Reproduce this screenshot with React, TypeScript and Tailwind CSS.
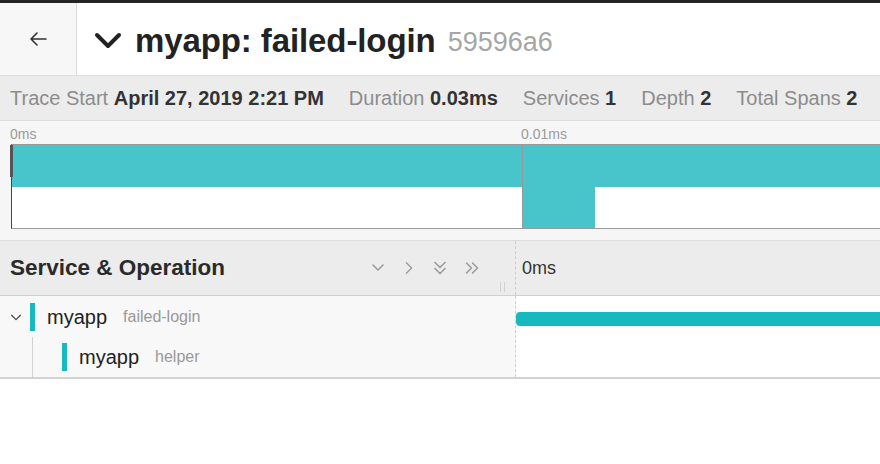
import React from "react";

const Chev = ({ d, w = 14, h = 14, sw = 1.5, color = "#999" }: { d: string; w?: number; h?: number; sw?: number; color?: string }) => (
  <svg width={w} height={h} viewBox="0 0 16 16" fill="none" stroke={color} strokeWidth={sw} strokeLinecap="round" strokeLinejoin="round">
    <path d={d} />
  </svg>
);

export default function App() {
  return (
    <div className="w-[880px] h-[464px] bg-white overflow-hidden font-['Liberation_Sans',Arial,sans-serif] text-[#222]">
      <div className="h-[3px] bg-[#242424]" />
      {/* header */}
      <header className="flex h-[73px] border-b border-[#dedede]">
        <div className="w-[77px] shrink-0 bg-[#f7f7f7] border-r border-[#dadada] flex items-center justify-center">
          <svg width="24" height="24" viewBox="0 0 24 24" fill="none" stroke="#333" strokeWidth="1.6" strokeLinecap="round" strokeLinejoin="round">
            <path d="M20 12H5M11 6l-6 6 6 6" />
          </svg>
        </div>
        <div className="flex items-center pl-[17px] pt-[3px]">
          <svg width="28" height="18" viewBox="0 0 28 18" fill="none" stroke="#222" strokeWidth="4" strokeLinecap="round" strokeLinejoin="round">
            <path d="M3 3l11 11L25 3" />
          </svg>
          <span className="ml-[13px] text-[33px] font-bold tracking-[-0.1px] leading-none">myapp: failed-login</span>
          <span className="ml-[12px] text-[27px] text-[#a6a6a6] leading-none mt-[3px]">59596a6</span>
        </div>
      </header>
      {/* stats */}
      <div className="h-[44px] bg-[#ececec] flex items-center pl-[10px] text-[20px] text-[#8c8c8c] gap-[25px]">
        <span>Trace Start <b className="text-[#333]">April 27, 2019 2:21 PM</b></span>
        <span>Duration <b className="text-[#333]">0.03ms</b></span>
        <span>Services <b className="text-[#333]">1</b></span>
        <span>Depth <b className="text-[#333]">2</b></span>
        <span>Total Spans <b className="text-[#333]">2</b></span>
      </div>
      {/* minimap */}
      <div className="h-[121px] bg-[#f6f6f6] border-t border-[#dcdcdc] border-b border-[#d8d8d8] pl-[11px] pt-[4px]">
        <div className="flex text-[14px] text-[#9a9a9a] h-[19px] items-center -ml-[1px]">
          <span className="w-[511px]">0ms</span>
          <span>0.01ms</span>
        </div>
        <div className="relative h-[85px] border-y border-[#9a9a9a] border-l border-l-[#444] bg-white flex flex-col">
          <div className="h-[42px] bg-[#48c5ca]" />
          <div className="flex-1 flex">
            <div className="w-[510px]" />
            <div className="w-[73px] bg-[#48c5ca]" />
          </div>
          <div className="absolute left-[510px] top-0 bottom-0 w-px bg-[#999]" />
          <div className="absolute -left-[2px] top-0 h-[32px] w-[3px] bg-[#555]" />
        </div>
      </div>
      {/* table header */}
      <div className="flex h-[55px] bg-[#ebeceb] border-b border-[#d0d0d0]">
        <div className="w-[516px] shrink-0 relative flex items-center pl-[10px] border-r border-dashed border-[#cfcfcf]">
          <span className="text-[22.5px] font-bold text-[#2a2a2a]">Service &amp; Operation</span>
          <div className="absolute left-[370px] top-[19px] flex items-center gap-[16px]">
            <Chev d="M3 5l5 5 5-5" w={16} h={16} />
            <Chev d="M5 2l6 6-6 6" w={14} h={16} />
            <Chev d="M3 2.5l5 5 5-5M3 8.5l5 5 5-5" w={16} h={16} />
            <Chev d="M2.5 3l5 5-5 5M8.5 3l5 5-5 5" w={16} h={16} />
          </div>
          <div className="absolute left-[500px] top-[41px] h-[10px] w-[5px] border-x border-[#d2d2d2]" />
        </div>
        <div className="flex items-center pl-[6px] text-[18px] text-[#333]">0ms</div>
      </div>
      {/* rows */}
      <div className="flex border-b-2 border-[#d3d3d3]">
        <div className="w-[516px] shrink-0 bg-[#f8f8f8] border-r border-dashed border-[#d0d0d0]">
          <div className="h-[41px] flex items-center relative">
            <div className="w-[30px] flex justify-center pl-[1px]">
              <Chev d="M3 6l5 5 5-5" w={14} h={14} sw={1.4} color="#444" />
            </div>
            <div className="w-[5px] h-[28px] bg-[#17b8be]" />
            <span className="ml-[12px] text-[20px] text-[#222]">myapp</span>
            <span className="ml-[16px] text-[16px] text-[#999]">failed-login</span>
          </div>
          <div className="h-[40px] flex items-center relative">
            <div className="absolute left-[32px] top-0 bottom-0 w-px bg-[#d2d2d2]" />
            <div className="ml-[62px] w-[5px] h-[28px] bg-[#17b8be]" />
            <span className="ml-[12px] text-[20px] text-[#222]">myapp</span>
            <span className="ml-[16px] text-[16px] text-[#999]">helper</span>
          </div>
        </div>
        <div className="flex-1 bg-white">
          <div className="h-[41px] flex items-center">
            <div className="w-full h-[14px] bg-[#17b8be] rounded-l-[4px] mt-[4px]" />
          </div>
          <div className="h-[40px]" />
        </div>
      </div>
    </div>
  );
}
